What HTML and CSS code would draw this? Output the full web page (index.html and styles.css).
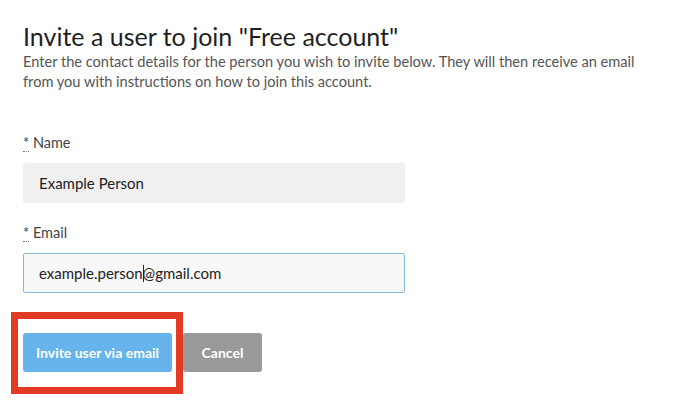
FILE: index.html
```html
<!DOCTYPE html>
<html>
<head>
<meta charset="utf-8">
<link rel="stylesheet" href="styles.css">
</head>
<body>
<main class="page">
  <h1 class="title">Invite a user to join "Free account"</h1>
  <p class="intro">Enter the contact details for the person you wish to invite below. They will then receive an email from you with instructions on how to join this account.</p>
  <form class="form">
    <div class="field">
      <label class="label"><abbr class="req" title="required">*</abbr> Name</label>
      <div class="input input-filled">Example Person</div>
    </div>
    <div class="field">
      <label class="label"><abbr class="req" title="required">*</abbr> Email</label>
      <div class="input input-focus">example.person<span class="caret"></span>@gmail.com</div>
    </div>
    <div class="actions">
      <div class="highlight">
        <button type="button" class="btn btn-primary">Invite user via email</button>
      </div>
      <button type="button" class="btn btn-cancel">Cancel</button>
    </div>
  </form>
</main>
</body>
</html>
```
FILE: styles.css
```css
html, body {
  margin: 0;
  padding: 0;
  background: #ffffff;
}
body {
  font-family: Lato, "Open Sans", sans-serif;
  color: #333;
  min-height: 409px;
}
.page {
  padding: 20px 23px 37px 23px;
  width: 640px;
}
.title {
  margin: 0;
  font-size: 25px;
  font-weight: 400;
  line-height: 32px;
  color: #1f1f1f;
}
.intro {
  margin: 0;
  font-size: 14.6px;
  line-height: 20px;
  color: #555;
}
.form {
  margin-top: 41px;
  display: flex;
  flex-direction: column;
}
.field {
  display: flex;
  flex-direction: column;
  margin-bottom: 20px;
}
.label {
  font-size: 14.5px;
  line-height: 20px;
  color: #444;
  margin-bottom: 10px;
}
.req {
  text-decoration: none;
  border-bottom: 1px dotted #777;
}
.input {
  box-sizing: border-box;
  width: 382px;
  height: 40px;
  padding: 0 15px;
  display: flex;
  align-items: center;
  font-size: 15px;
  color: #222;
  border-radius: 2px;
}
.input-filled {
  background: #f0f0f0;
  border: 1px solid #f0f0f0;
}
.input-focus {
  background: #f8f8f8;
  border: 1px solid #86b9e0;
}
.caret {
  display: inline-block;
  width: 1px;
  height: 17px;
  background: #222;
  margin-right: -1px;
}
.actions {
  margin-top: 20px;
  display: flex;
  gap: 11px;
}
.highlight {
  position: relative;
  display: flex;
}
.highlight::before {
  content: "";
  position: absolute;
  top: -21px;
  left: -12px;
  right: -11px;
  bottom: -22px;
  border: 7px solid #e23a24;
  pointer-events: none;
}
.btn {
  height: 39px;
  border: none;
  border-radius: 3px;
  font-family: inherit;
  font-size: 14px;
  font-weight: 700;
  color: #fff;
  cursor: pointer;
}
.btn-primary {
  width: 149px;
  background: #67b3ec;
}
.btn-cancel {
  width: 79px;
  background: #999999;
}
```
